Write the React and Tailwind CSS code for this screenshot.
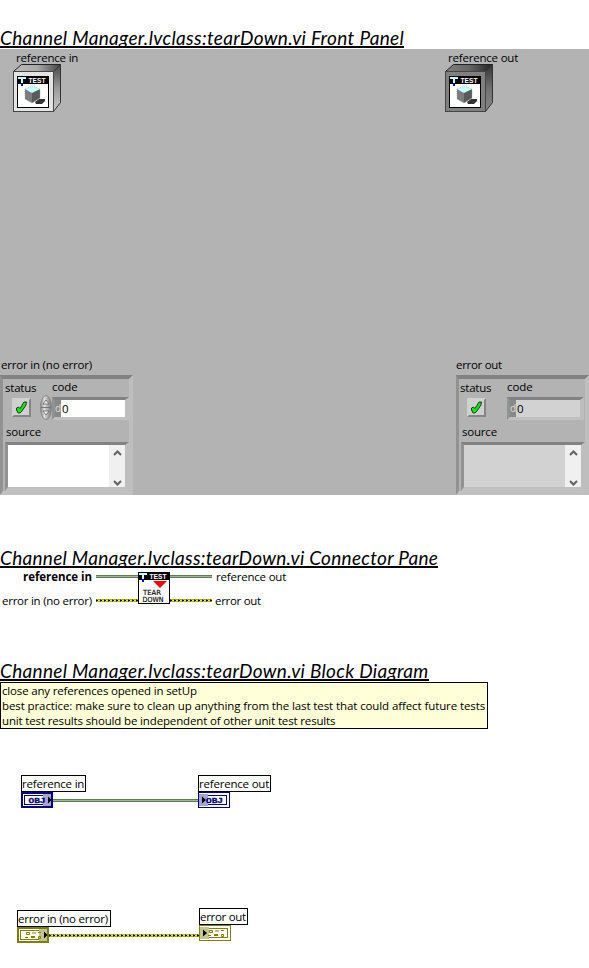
import React from "react";

function Title({ children, className }) {
  return (
    <h1
      className={`box-border h-[24px] overflow-hidden whitespace-nowrap border-b-2 border-black font-['Lato','Open_Sans',sans-serif] text-[19px] font-normal italic leading-[28px] text-black ${className}`}
    >
      {children}
    </h1>
  );
}

function IconHeader() {
  return (
    <g>
      <rect width="32" height="32" fill="#000" />
      <rect x="1" y="8" width="30" height="23" fill="#fff" />
      <path d="M1 1h8v2H6v4H4V3H1z" fill="#c8ffff" shapeRendering="crispEdges" />
      <path d="M4 7h2v3H4z" fill="#0000d0" shapeRendering="crispEdges" />
      <text x="11.5" y="6.5" fill="#fff" fontSize="7" fontWeight="700" textLength="17" lengthAdjust="spacingAndGlyphs" fontFamily="Liberation Sans, sans-serif">TEST</text>
    </g>
  );
}

function ObjectControl({ id, dark }) {
  return (
    <svg width="48" height="48" viewBox="0 0 48 48" className="block">
      <defs>
        <linearGradient id={`${id}-top`} x1="0" y1="0" x2="1" y2="0">
          <stop offset="0" stopColor={dark ? "#808080" : "#bbb"} />
          <stop offset=".5" stopColor={dark ? "#666" : "#aaa"} />
          <stop offset="1" stopColor={dark ? "#222" : "#444"} />
        </linearGradient>
        <linearGradient id={`${id}-side`} x1="0" y1="0" x2="0" y2="1">
          <stop offset="0" stopColor={dark ? "#333" : "#444"} />
          <stop offset=".5" stopColor={dark ? "#707070" : "#999"} />
          <stop offset="1" stopColor={dark ? "#888" : "#ccc"} />
        </linearGradient>
      </defs>
      <path d="M.5 7.5l8-7h39l-7 7z" fill={`url(#${id}-top)`} stroke="#222" />
      <path d="M40.5 7.5l7-7v38l-7 9z" fill={`url(#${id}-side)`} stroke="#333" />
      <rect x=".5" y="7.5" width="40" height="40" fill={dark ? "#808080" : "#e4e4e4"} stroke="#444" />
      <g transform="translate(4 12)">
        <IconHeader />
        <path d="M18 26l4-3h6v2l-3 3h-6z" fill="#333" />
        <path d="M8 13l7 3v11l-7-4z" fill="#7c7c7c" />
        <path d="M15 16l8-3v9l-8 5z" fill="#5a5a5a" />
        <path d="M15.500 10l7.500 3-8 4-7-4z" fill="#c8ffff" />
        <path d="M8 13v10l7 4 8-5v-9l-7.500-3z" fill="none" stroke="#78a8a8" strokeWidth=".7" strokeDasharray="1 1" />
      </g>
    </svg>
  );
}

function Scrollbar() {
  return (
    <div className="flex w-4 flex-col items-center justify-between bg-[#f0f0f0] pb-[1px] pt-[5px]">
      <svg width="9" height="6" viewBox="0 0 9 6"><path d="M1 5l3.5-3.5L8 5" fill="none" stroke="#606060" strokeWidth="2" /></svg>
      <svg width="9" height="6" viewBox="0 0 9 6"><path d="M1 1l3.5 3.5L8 1" fill="none" stroke="#606060" strokeWidth="2" /></svg>
    </div>
  );
}

const bevel = "border-t-[#828282] border-l-[#929292] border-r-[#bebebe] border-b-[#c0c0c0]";

function ErrorCluster({ label, indicator }) {
  const fill = indicator ? "bg-[#d2d2d2]" : "bg-white";
  return (
    <div className="w-[133px]">
      <div className={`h-[17px] leading-[15px] ${indicator ? "tracking-[-0.3px]" : "pl-[1px] tracking-[-0.2px]"}`}>{label}</div>
      <div className={`mt-[1px] h-[120px] border-[4px] border-l-[3px] ${bevel}`}>
        <div className="flex h-[41px]">
          <div className={indicator ? "w-[48px] pl-[1px]" : "w-[37px] pl-[2px]"}>
            <div className="h-[18px] leading-[18px] tracking-[-0.2px]">status</div>
            <div className={`mt-[1px] flex h-[19px] w-[19px] items-center justify-center border-2 border-b-[#858585] border-l-[#d0d0d0] border-r-[#858585] border-t-[#d0d0d0] bg-[#d0d0d0] ${indicator ? "ml-[7px]" : "ml-[7px]"}`}>
              <svg width="13" height="13" viewBox="0 0 13 13">
                <path d="M1.500 7l2-1 1.500 1.500L9 1h2.500l-.5 3-4 6-2 2H3L1.500 9z" fill="#00ee00" stroke="#111" strokeWidth=".8" />
              </svg>
            </div>
          </div>
          {!indicator && (
            <svg width="12" height="25" viewBox="0 0 12 25" className="mt-[16px] shrink-0">
              <defs><linearGradient id="knob"><stop stopColor="#888" /><stop offset=".35" stopColor="#ddd" /><stop offset="1" stopColor="#777" /></linearGradient></defs>
              <ellipse cx="6" cy="12.5" rx="5.5" ry="12" fill="url(#knob)" stroke="#888" />
              <path d="M1 12.5h10" stroke="#777" />
              <path d="M3 9l3-4 3 4zM3 16l3 4 3-4z" fill="#eee" stroke="#666" strokeWidth=".8" />
            </svg>
          )}
          <div className="w-[77px]">
            <div className="h-[17px] leading-[16px] tracking-[-0.1px]">code</div>
            <div className={`mt-[1px] flex h-[23px] border-[3px] border-r-[4px] ${bevel} ${fill}`}>
              <div className={`flex justify-end bg-[#888] text-[10px] leading-[16px] text-[#ddd] ${indicator ? "w-[6px]" : "w-[6px]"}`}>d</div>
              <div className="pl-[1px] leading-[17px]">0</div>
            </div>
          </div>
        </div>
        <div className="mt-[3px] h-[19px] pl-[3px] leading-[17px] tracking-[-0.2px]">source</div>
        <div className={`flex h-[49px] w-[124px] justify-end border-[4px] border-l-[3px] border-t-[3px] ${bevel} ${fill} ${indicator ? "ml-[2px]" : "ml-[2px]"}`}>
          <Scrollbar />
        </div>
      </div>
    </div>
  );
}

function Wire({ error, width }) {
  return (
    <svg width={width} height="4" viewBox={`0 0 ${width} 4`} className="block shrink-0" shapeRendering="crispEdges">
      <rect width={width} height="3" fill={error ? "#b4b400" : "#5c8056"} />
      {error ? (
        <g>
          <path d={`M0 .5H${width}`} stroke="#606000" strokeDasharray="1 3" />
          <path d={`M0 2.5H${width}`} stroke="#606000" strokeDasharray="1 3" />
          <path d={`M0 1.5H${width}`} stroke="#000" strokeDasharray="2 2" />
          <path d={`M2 1.500H${width}`} stroke="#e8e840" strokeDasharray="2 2" />
        </g>
      ) : (
        <path d={`M0 1.5H${width}`} stroke="#a4b4a0" />
      )}
    </svg>
  );
}

function Terminal({ error, out }) {
  const c = error ? "#808000" : "#000080";
  const shade = error ? "#c4c493" : "#a4a4cf";
  const inset = out ? 1 : 2;
  return (
    <svg width="32" height="16" viewBox="0 0 32 16" className="block">
      <rect width="32" height="16" fill={c} />
      <rect x={inset} y={inset} width={32 - inset * 2} height={16 - inset * 2} fill="#fff" />
      <rect x="3.5" y="3.5" width="25" height="9" fill="#fff" stroke={c} />
      {out ? <rect x="1" y="2" width="9" height="12" fill={shade} /> : <rect x="22" y="2" width="8" height="12" fill={shade} />}
      {error ? (
        <g transform={out ? "translate(1 0)" : ""} fill="none" stroke="#808000">
          <path d="M9.5 5.5h3v2h-3zM15 6h4M14 9.5h4M14 10.5h4M8 10.5h3M21.500 9.500h2v2h-2zM21 5.500h3" />
        </g>
      ) : (
        <text x={out ? 8 : 7.5} y="11" fill="#000080" stroke="#000080" strokeWidth=".3" fontSize="8" fontWeight="700" textLength={out ? 17 : 17} lengthAdjust="spacingAndGlyphs" fontFamily="Liberation Mono, monospace">OBJ</text>
      )}
      <path d={out ? "M4 4.500v7l4-3.500z" : "M27 4.500v7l3.500-3.500z"} fill="#000" />
    </svg>
  );
}

function Node({ label, error, out, className }) {
  return (
    <div>
      <div className={`h-[17px] whitespace-nowrap border border-black leading-[16px] ${className}`}>{label}</div>
      <Terminal error={error} out={out} />
    </div>
  );
}

export default function App() {
  return (
    <main className="h-[968px] w-[589px] overflow-hidden bg-white font-['Open_Sans','Noto_Sans',sans-serif] text-[11.5px] leading-[15px] text-black">
      <section className="pt-[24px]">
        <Title className="w-[404px] tracking-[0.33px]">Channel Manager.lvclass:tearDown.vi Front Panel</Title>
        <div className="mt-[1px] flex h-[446px] flex-col justify-between bg-[#b3b3b3]">
          <div className="flex justify-between pl-[13px] pr-[79px]">
            <div>
              <div className="h-[15px] pl-[3px] leading-[18px] tracking-[-0.2px]">reference in</div>
              <ObjectControl id="in" />
            </div>
            <div className="w-[65px]">
              <div className="h-[15px] whitespace-nowrap pl-[3px] leading-[18px] tracking-[-0.2px]">reference out</div>
              <ObjectControl id="out" dark />
            </div>
          </div>
          <div className="flex justify-between">
            <ErrorCluster label="error in (no error)" />
            <ErrorCluster label="error out" indicator />
          </div>
        </div>
      </section>

      <section className="pt-[49px]">
        <Title className="w-[438px] tracking-[0.28px]">Channel Manager.lvclass:tearDown.vi Connector Pane</Title>
        <div className="mt-[4px] flex h-[32px]">
          <div className="flex w-[96px] flex-col justify-between whitespace-nowrap">
            <div className="-mt-[3px] pl-[23px] font-bold tracking-[-0.05px]">reference in</div>
            <div className="-mb-[4px] pl-[2px] tracking-[-0.25px]">error in (no error)</div>
          </div>
          <div className="flex flex-col justify-between pb-[1px] pt-[3px]"><Wire width={42} /><Wire width={42} error /></div>
          <svg width="32" height="32" viewBox="0 0 32 32">
            <IconHeader />
            <path d="M15 9h14l-7 7z" fill="#f00" />
            <g fill="#000" stroke="#000" strokeWidth=".15" fontSize="7" fontFamily="DejaVu Sans, sans-serif">
              <text x="5" y="23" textLength="18" lengthAdjust="spacingAndGlyphs">TEAR</text>
              <text x="4.500" y="30" textLength="21" lengthAdjust="spacingAndGlyphs">DOWN</text>
            </g>
          </svg>
          <div className="flex flex-col justify-between pb-[1px] pt-[3px]"><Wire width={42} /><Wire width={42} error /></div>
          <div className="flex flex-col justify-between whitespace-nowrap pl-[3px]">
            <div className="-mt-[3px] pl-[1px] tracking-[-0.2px]">reference out</div>
            <div className="-mb-[4px] tracking-[-0.3px]">error out</div>
          </div>
        </div>
      </section>

      <section className="pt-[53px]">
        <Title className="w-[429px] tracking-[0.3px]">Channel Manager.lvclass:tearDown.vi Block Diagram</Title>
        <div className="mt-[1px] h-[47px] w-[488px] whitespace-nowrap border border-black bg-[#ffffd8] pl-[1px] tracking-[-0.1px]">
          <p className="tracking-[-0.17px]">close any references opened in setUp</p>
          <p>best practice: make sure to clean up anything from the last test that could affect future tests</p>
          <p className="tracking-[-0.15px]">unit test results should be independent of other unit test results</p>
        </div>
        <div className="mt-[46px] flex pl-[21px]">
          <div className="w-[32px]"><Node label="reference in" className="w-[65px] tracking-[-0.2px]" /></div>
          <div className="pt-[24px]"><Wire width={145} /></div>
          <Node label="reference out" out className="w-[73px] tracking-[-0.2px]" />
        </div>
        <div className="mt-[100px] flex pl-[17px]">
          <div className="w-[32px] pt-[2px]"><Node label="error in (no error)" error className="w-[94px] tracking-[-0.25px]" /></div>
          <div className="pt-[26px]"><Wire width={150} error /></div>
          <Node label="error out" error out className="w-[49px] tracking-[-0.3px]" />
        </div>
      </section>
    </main>
  );
}
